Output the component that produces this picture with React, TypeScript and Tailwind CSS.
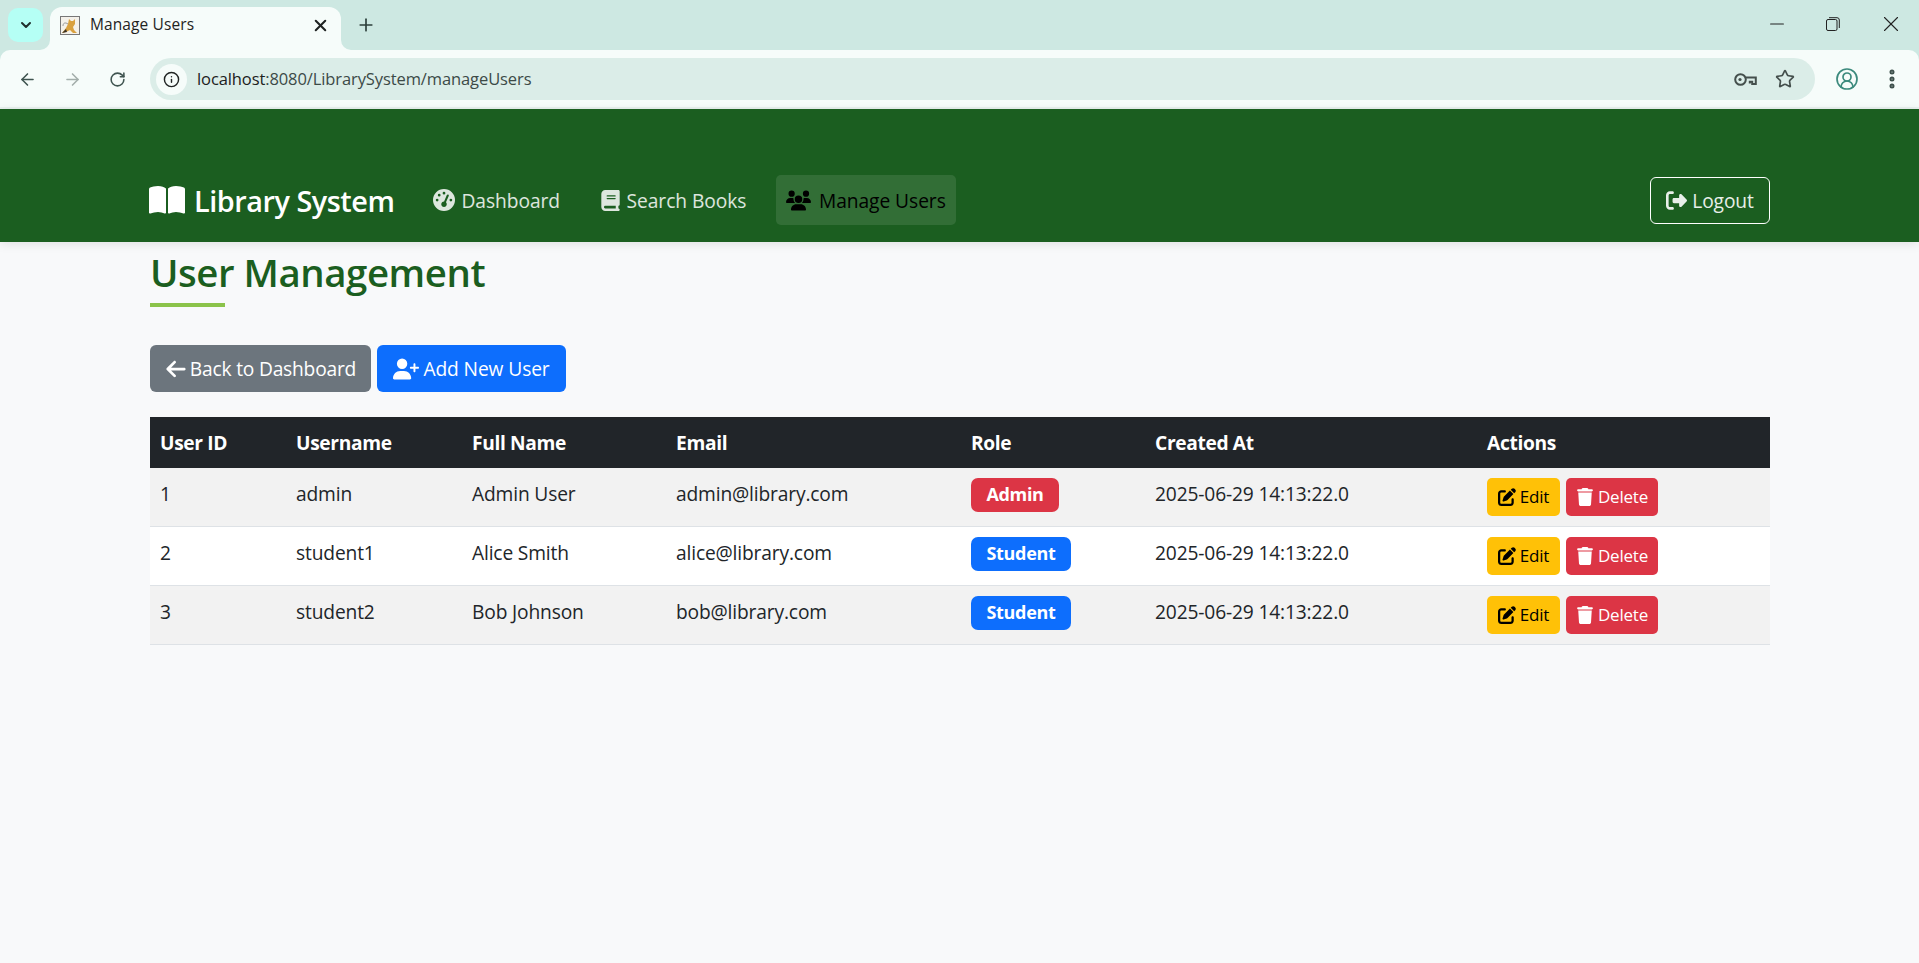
// App.tsx
import { ArrowLeft, ArrowRight, ChevronDown, Info, MoreVertical, Plus, RotateCw, Star, CircleUserRound, X, Minus } from "lucide-react";
import { FaArrowLeft, FaBook, FaBookOpen, FaGaugeHigh, FaPenToSquare, FaRightFromBracket, FaTrash, FaUserPlus, FaUsers } from "react-icons/fa6";

interface UserRow {
  id: number;
  username: string;
  fullName: string;
  email: string;
  role: "Admin" | "Student";
  createdAt: string;
}

const USERS: UserRow[] = [
  { id: 1, username: "admin", fullName: "Admin User", email: "admin@library.com", role: "Admin", createdAt: "2025-06-29 14:13:22.0" },
  { id: 2, username: "student1", fullName: "Alice Smith", email: "alice@library.com", role: "Student", createdAt: "2025-06-29 14:13:22.0" },
  { id: 3, username: "student2", fullName: "Bob Johnson", email: "bob@library.com", role: "Student", createdAt: "2025-06-29 14:13:22.0" },
];

const COLUMNS = [
  { label: "User ID", width: "w-[136px]" },
  { label: "Username", width: "w-[176px]" },
  { label: "Full Name", width: "w-[204px]" },
  { label: "Email", width: "w-[295px]" },
  { label: "Role", width: "w-[184px]" },
  { label: "Created At", width: "w-[332px]" },
  { label: "Actions", width: "w-[293px]" },
];

function BrowserChrome() {
  return (
    <div className="bg-[#cde8e2] font-['Open_Sans',sans-serif]">
      {/* tab strip */}
      <div className="flex h-[50px] items-end">
        <div className="mb-[8px] ml-[8px] flex h-[34px] w-[35px] items-center justify-center rounded-[10px] bg-[#b5fff5]">
          <ChevronDown size={16} strokeWidth={3} className="text-[#1f2f2c]" />
        </div>
        <div className="relative ml-[7px] flex h-[43px] w-[291px] items-center rounded-t-[12px] bg-[#f6fcfa] pb-[7px] pl-[10px] pr-[11px]">
          {/* flared tab corners */}
          <svg viewBox="0 0 10 10" className="absolute bottom-0 -left-[10px] h-[10px] w-[10px]">
            <path d="M10 0v10H0a10 10 0 0 0 10-10z" fill="#f6fcfa" />
          </svg>
          <svg viewBox="0 0 10 10" className="absolute bottom-0 -right-[10px] h-[10px] w-[10px]">
            <path d="M0 0v10h10A10 10 0 0 1 0 0z" fill="#f6fcfa" />
          </svg>
          <div className="flex h-[19px] w-[20px] items-center justify-center border border-[#777] bg-[#f4f1ea]">
            <svg viewBox="0 0 18 17" className="h-[17px] w-[18px]">
              <path d="M1 16 5 11l2-4 1-5 2 2h2l2-2v5l-2 3 1 3 3 3h-4l-3-3-4 2z" fill="#d9a13f" />
              <path d="M1 16 5 12l1 3z" fill="#3a3226" />
              <path d="M7 7C4 5 2 6 2 9" fill="none" stroke="#9a9a9a" strokeWidth="1" />
            </svg>
          </div>
          <span className="ml-[10px] text-[15.5px] tracking-[0.1px] text-[#1f2322]">Manage Users</span>
          <X size={19} strokeWidth={2.6} className="ml-auto text-[#1f2322]" />
        </div>
        <Plus size={20} strokeWidth={2} className="mb-[15px] ml-[15px] text-[#2c3f3b]" />
        <div className="ml-auto mb-[13px] flex items-center gap-[38px] pr-[15px] text-[#222]">
          <Minus size={22} strokeWidth={1.1} />
          <svg viewBox="0 0 14 14" className="h-[14px] w-[14px]" fill="none" stroke="#222" strokeWidth="1">
            <rect x="0.5" y="2.5" width="10.5" height="11" rx="1.5" />
            <path d="M3 .7h8a2.3 2.3 0 0 1 2.3 2.3v8" />
          </svg>
          <X size={26} strokeWidth={1} />
        </div>
      </div>
      {/* toolbar */}
      <div className="flex h-[59px] items-start rounded-t-[10px] border-b-[2px] border-[#e9f1ef] bg-[#f6fcfa] pt-[8px]">
        <div className="flex h-[42px] w-[150px] items-center pl-[18px] text-[#3f5450]">
          <ArrowLeft size={19} strokeWidth={2} />
          <ArrowRight size={19} strokeWidth={2} className="ml-[26px] text-[#a3aeab]" />
          <RotateCw size={17} strokeWidth={2.2} className="ml-[27px]" />
        </div>
        <div className="flex h-[42px] w-[1665px] items-center rounded-full bg-[#dbede8] pl-[6px]">
          <div className="flex h-[31px] w-[31px] items-center justify-center rounded-full bg-[#f6fcfa]">
            <Info size={17} strokeWidth={2} className="text-[#1f2322]" />
          </div>
          <span className="ml-[10px] pt-[1px] text-[16.5px] tracking-[-0.1px] text-[#3c4a47]">
            <span className="text-[#1c2120]">localhost</span>:8080/LibrarySystem/manageUsers
          </span>
          <svg viewBox="0 0 23 13" className="ml-auto h-[13px] w-[23px]" fill="none" stroke="#444f4c" strokeWidth="2">
            <circle cx="6.5" cy="6.5" r="5.3" />
            <path d="M11.5 4.5h10.3v6.5h-3.6V8.8h-2.4v1.6" />
            <circle cx="6" cy="6.5" r="1.6" fill="#444f4c" stroke="none" />
          </svg>
          <Star size={20} strokeWidth={2} className="ml-[18px] mr-[20px] text-[#444f4c]" />
        </div>
        <div className="flex h-[42px] flex-1 items-center pl-[20px] text-[#3d4f4b]">
          <CircleUserRound size={24} strokeWidth={1.7} className="text-[#3c8a7d]" />
          <MoreVertical size={24} strokeWidth={3} className="ml-[21px]" />
        </div>
      </div>
    </div>
  );
}

function NavLink({ icon, label, active }: { icon: React.ReactNode; label: string; active?: boolean }) {
  return (
    <a
      className={
        active
          ? "flex h-[50px] items-center gap-[8px] rounded-[5px] bg-white/10 px-[10px] text-black"
          : "flex h-[50px] items-center gap-[6px] rounded-[5px] px-[10px] text-white/85"
      }
    >
      {icon}
      <span className="pt-[2px] text-[19.2px] font-medium tracking-[-0.05px]">{label}</span>
    </a>
  );
}

function Navbar() {
  return (
    <nav className="relative z-10 flex h-[133px] items-end bg-[#1b5e20] pb-[17px] pl-[150px] pr-[149px] shadow-[0_2px_10px_rgba(0,0,0,0.1)]">
      <div className="flex w-full items-center">
        <a className="flex h-[50px] items-center gap-[9px] text-white">
          <FaBookOpen size={36} className="-ml-[1px]" />
          <span className="pt-[2px] text-[28.8px] font-semibold tracking-[-0.45px]">Library System</span>
        </a>
        <div className="ml-[29px] flex items-center gap-[19.5px]">
          <NavLink icon={<FaGaugeHigh size={22} />} label="Dashboard" />
          <NavLink icon={<FaBook size={21} />} label="Search Books" />
          <NavLink icon={<FaUsers size={25} />} label="Manage Users" active />
        </div>
        <button className="ml-auto flex h-[47px] w-[120px] items-center justify-center gap-[5px] rounded-[6px] border border-white text-[19.2px] tracking-[-0.1px] text-white/90">
          <FaRightFromBracket size={21} />
          <span className="pt-[2px]">Logout</span>
        </button>
      </div>
    </nav>
  );
}

function UserTable() {
  return (
    <table className="w-full table-fixed border-separate border-spacing-0 text-[19.2px] tracking-[-0.15px] text-[#212529]">
      <thead>
        <tr className="h-[51px] bg-[#212529] text-left text-white">
          {COLUMNS.map((col) => (
            <th key={col.label} className={`${col.width} px-[10px] pt-[2px] font-bold tracking-[-0.35px]`}>
              {col.label}
            </th>
          ))}
        </tr>
      </thead>
      <tbody>
        {USERS.map((user) => (
          <tr key={user.id} className="h-[59px] odd:bg-[#f2f2f2] even:bg-white">
            <td className="border-b border-[#dee2e6] px-[10px] pb-[6px]">{user.id}</td>
            <td className="border-b border-[#dee2e6] px-[10px] pb-[6px]">{user.username}</td>
            <td className="border-b border-[#dee2e6] px-[10px] pb-[6px]">{user.fullName}</td>
            <td className="border-b border-[#dee2e6] px-[10px] pb-[6px]">{user.email}</td>
            <td className="border-b border-[#dee2e6] px-[10px] pb-[5px]">
              <span
                className={
                  user.role === "Admin"
                    ? "inline-flex h-[34px] w-[88px] items-center justify-center rounded-[7px] bg-[#dc3545] text-[18px] font-bold tracking-[-0.35px] text-white"
                    : "inline-flex h-[34px] w-[100px] items-center justify-center rounded-[7px] bg-[#0d6efd] text-[18px] font-bold tracking-[-0.3px] text-white"
                }
              >
                {user.role}
              </span>
            </td>
            <td className="border-b border-[#dee2e6] px-[10px] pb-[6px]">{user.createdAt}</td>
            <td className="border-b border-[#dee2e6] px-[10px] pb-[1px]">
              <div className="flex gap-[6px]">
                <button className="flex h-[38px] w-[73px] items-center justify-center gap-[4px] rounded-[5px] bg-[#ffc107] text-[17px] tracking-[-0.2px] text-black">
                  <FaPenToSquare size={18} />
                  Edit
                </button>
                <button className="flex h-[38px] w-[92px] items-center justify-center gap-[4px] rounded-[5px] bg-[#dc3545] text-[17px] tracking-[-0.2px] text-white">
                  <FaTrash size={18} />
                  Delete
                </button>
              </div>
            </td>
          </tr>
        ))}
      </tbody>
    </table>
  );
}

export default function App() {
  return (
    <div className="flex h-[963px] flex-col overflow-hidden bg-[#f8f9fa] font-['Open_Sans',sans-serif]">
      <BrowserChrome />
      <Navbar />
      <main className="pl-[150px] pr-[149px]">
        <h2 className="mt-[5px] text-[38.4px] font-semibold leading-[50px] tracking-[-0.45px] text-[#1b5e20]">User Management</h2>
        <div className="mt-[6px] h-[4px] w-[75px] bg-[#8bc34a]" />
        <div className="mt-[38px] flex gap-[6px]">
          <button className="flex h-[47px] w-[221px] items-center justify-center gap-[3px] rounded-[6px] bg-[#6c757d] text-[19.2px] tracking-[-0.2px] text-white">
            <FaArrowLeft size={22} />
            <span className="pt-[2px]">Back to Dashboard</span>
          </button>
          <button className="flex h-[47px] w-[189px] items-center justify-center gap-[4px] rounded-[6px] bg-[#0d6efd] text-[19.2px] tracking-[-0.1px] text-white">
            <FaUserPlus size={26} />
            <span className="pt-[2px]">Add New User</span>
          </button>
        </div>
        <div className="mt-[25px]">
          <UserTable />
        </div>
      </main>
    </div>
  );
}
